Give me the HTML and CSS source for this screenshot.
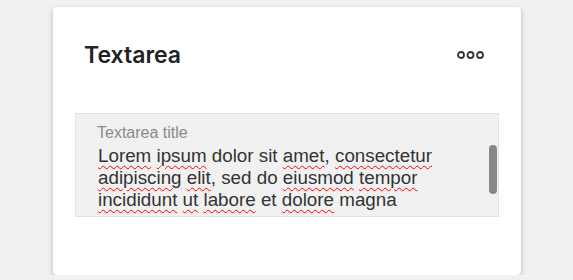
FILE: index.html
```html
<!DOCTYPE html>
<html lang="en">

<head>
    <meta charset="utf-8">
    <meta name="viewport" content="width=device-width, initial-scale=1.0">
    <title>Textarea</title>
    <link rel="stylesheet" href="styles.css">
</head>

<body>
    <section class="card">
        <header class="card_head">
            <h2>Textarea</h2>
            <div class="more">
                <svg width="28" height="10" viewBox="0 0 28 10">
                    <circle cx="4" cy="5" r="3" />
                    <circle cx="13.5" cy="5" r="3" />
                    <circle cx="23" cy="5" r="3" />
                </svg>
            </div>
        </header>

        <div class="field">
            <label class="field_title">Textarea title</label>
            <div class="field_text">
                <span class="typo">Lorem</span> <span class="typo">ipsum</span> dolor sit <span class="typo">amet</span>, <span class="typo">consectetur</span>
                <span class="typo">adipiscing</span> <span class="typo">elit</span>, sed do <span class="typo">eiusmod</span> <span class="typo">tempor</span>
                <span class="typo">incididunt</span> <span class="typo">ut</span> <span class="typo">labore</span> et <span class="typo">dolore</span> magna
            </div>
            <div class="scroll"></div>
        </div>
    </section>
</body></html>
```

FILE: styles.css
```css
body {
    margin: 0;
    background-color: #f1f1f1;
    font-family: "Liberation Sans", Arial, sans-serif;
}

.card {
    width: 468px;
    height: 268px;
    margin: 7px 0 0 53px;
    background-color: white;
    border-radius: 4px;
    box-shadow: 0 2px 5px rgba(0, 0, 0, 0.25);
    padding: 0 22px;
    box-sizing: border-box;
}

.card_head {
    display: flex;
    justify-content: space-between;
    align-items: center;
    padding: 34px 14px 0 9px;
    height: 28px;
}

.card_head h2 {
    font-family: Inter, sans-serif;
    font-weight: 600;
    font-size: 23px;
    line-height: 28px;
    color: #222;
    margin: 0;
}

.more svg {
    display: block;
}

.more circle {
    fill: none;
    stroke: #333;
    stroke-width: 1.8;
}

.field {
    position: relative;
    margin-top: 44px;
    height: 104px;
    box-sizing: border-box;
    background-color: #f1f1f1;
    border: 1px solid #e2e2e2;
    padding: 10px 48px 0 21px;
    overflow: hidden;
}

.field_title {
    display: block;
    font-size: 16px;
    line-height: 18px;
    color: #8a8a8a;
}

.field_text {
    font-size: 18.8px;
    line-height: 22px;
    color: #333;
    margin: 3px 0 0 1px;
}

.typo {
    text-decoration: underline wavy #f00;
    text-decoration-thickness: 1px;
    text-underline-offset: 3px;
}

.scroll {
    position: absolute;
    top: 31px;
    right: 1px;
    width: 8px;
    height: 49px;
    border-radius: 4px;
    background-color: #888;
}
```
